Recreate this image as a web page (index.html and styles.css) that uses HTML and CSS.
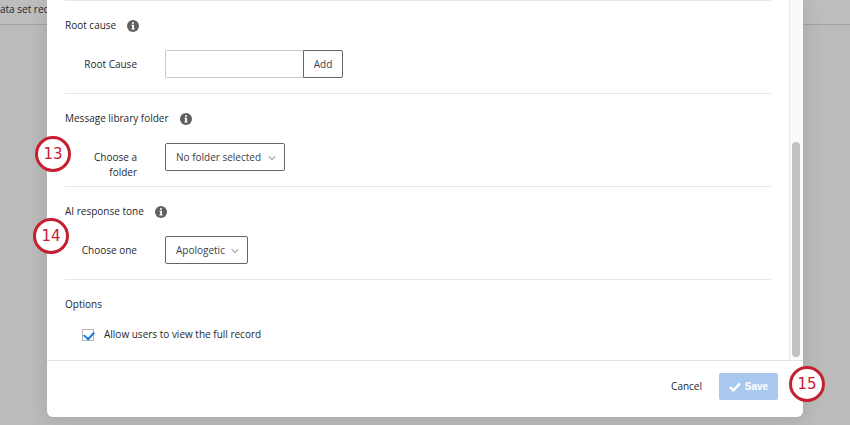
FILE: index.html
```html
<!DOCTYPE html>
<html lang="en">
<head>
<meta charset="utf-8">
<title>Ticket settings</title>
<link rel="stylesheet" href="styles.css">
</head>
<body>
<svg class="defs" aria-hidden="true">
  <symbol id="info" viewBox="0 0 12 12">
    <circle cx="6" cy="6" r="6" fill="#606060"/>
    <path d="M5 2.2h2v1.6H5zM4.6 4.8H7v3.6h.6v1.1H4.4V8.4h.8V5.9h-.6z" fill="#fff"/>
  </symbol>
  <symbol id="chevron" viewBox="0 0 8 6">
    <path d="M1 1.4 4 4.6 7 1.4" fill="none" stroke="#6a6e75" stroke-width="1"/>
  </symbol>
</svg>
<div class="page">
  <header class="backdrop"><span class="crumb">ata set rec</span></header>
  <main class="modal" role="dialog" aria-label="Ticket settings">
    <div class="content">
      <form class="form" id="settings">
        <section class="section">
          <h2 class="title">Root cause <svg class="info"><use href="#info"/></svg></h2>
          <div class="row">
            <label class="label" for="cause">Root Cause</label>
            <div class="group">
              <input class="text" id="cause" type="text">
              <button class="button add" type="button">Add</button>
            </div>
          </div>
        </section>
        <section class="section">
          <h2 class="title">Message library folder <svg class="info"><use href="#info"/></svg></h2>
          <div class="row">
            <label class="label" for="folder">Choose a folder</label>
            <div class="picker">
              <select class="button select" id="folder"><option>No folder selected</option></select>
              <svg class="chevron"><use href="#chevron"/></svg>
            </div>
          </div>
          <span class="badge badge-folder">13</span>
        </section>
        <section class="section">
          <h2 class="title">AI response tone <svg class="info"><use href="#info"/></svg></h2>
          <div class="row">
            <label class="label" for="tone">Choose one</label>
            <div class="picker">
              <select class="button select" id="tone"><option>Apologetic</option></select>
              <svg class="chevron"><use href="#chevron"/></svg>
            </div>
          </div>
          <span class="badge badge-tone">14</span>
        </section>
        <section class="section">
          <h2 class="title">Options</h2>
          <label class="option"><input class="check" type="checkbox" checked> Allow users to view the full record</label>
        </section>
      </form>
      <div class="track"><div class="thumb"></div></div>
    </div>
    <footer class="footer">
      <button class="cancel" type="button">Cancel</button>
      <button class="save" type="submit" form="settings" disabled>
        <svg class="tick" viewBox="0 0 12 10"><path d="M1 5.2 4.4 8.4 11 1.4" fill="none" stroke="#fff" stroke-width="2.4"/></svg>
        Save
      </button>
      <span class="badge badge-save">15</span>
    </footer>
  </main>
</div>
</body>
</html>
```
FILE: styles.css
```css
* { box-sizing: border-box; }

body {
  margin: 0;
  background: #bbb;
  color: #25282c;
  font: 10px/15px "Open Sans", "Liberation Sans", sans-serif;
}

button, input, select { font: inherit; color: inherit; }

.defs { position: absolute; width: 0; height: 0; }

.page {
  position: relative;
  display: flex;
  min-height: 100vh;
  padding: 0 47px 8px;
  overflow: hidden;
}

.backdrop {
  position: absolute;
  inset: 0 0 auto;
  height: 25px;
  padding-top: 2px;
  border-bottom: 1px solid #a2a2a2;
  background: #bdbdbd;
}

.modal {
  position: relative;
  display: flex;
  flex: 1;
  flex-direction: column;
  border-radius: 0 0 6px 6px;
  background: #fff;
  box-shadow: 0 2px 20px rgba(0, 0, 0, 0.12);
}

.content { display: flex; flex: 1; }

.form { flex: 1; padding: 0 18px; }

.section {
  position: relative;
  min-height: 93px;
  padding-top: 17px;
  border-top: 1px solid #e8e8e8;
}

.section:last-child { min-height: 80px; }

.title {
  display: flex;
  align-items: center;
  gap: 11px;
  margin: 0;
  font-size: 10px;
  font-weight: 400;
}

.info { width: 12px; height: 12px; }

.row {
  display: grid;
  grid-template-columns: 72px 1fr;
  column-gap: 28px;
  align-items: start;
  height: 43px;
  margin-top: 17px;
}

.label { padding-top: 7px; text-align: right; }

.group { display: flex; }

.text {
  width: 138px;
  height: 28px;
  border: 1px solid #c8c8c8;
  border-right: 0;
  border-radius: 2px 0 0 2px;
}

.button {
  height: 28px;
  border: 1px solid #62666d;
  border-radius: 2px;
  background: #fff;
  color: #3c4147;
}

.add { width: 40px; padding: 0; border-radius: 0 2px 2px 0; }

.picker { position: relative; justify-self: start; }

.select { appearance: none; padding: 0 22px 0 10px; }

.chevron {
  position: absolute;
  top: 12px;
  right: 9px;
  width: 8px;
  height: 6px;
  pointer-events: none;
}

.option {
  display: flex;
  align-items: center;
  gap: 10px;
  margin: 15px 0 0 17px;
}

.check {
  appearance: none;
  width: 12px;
  height: 12px;
  margin: 0;
  border: 1px solid #b4b4b4;
  background: #fff;
  position: relative;
}

.check:checked::after {
  content: "";
  position: absolute;
  top: 1px;
  left: 1px;
  width: 8px;
  height: 5px;
  border: solid #1879e8;
  border-width: 0 0 2px 2px;
  transform: rotate(-48deg);
}

.track {
  display: flex;
  flex-direction: column;
  justify-content: flex-end;
  width: 14px;
  padding: 0 3px 3px 2px;
  border-left: 1px solid #e8e8e8;
  background: #fafafa;
}

.thumb { width: 8px; height: 215px; border-radius: 4px; background: #c2c2c2; }

.footer {
  position: relative;
  display: flex;
  align-items: center;
  justify-content: flex-end;
  gap: 17px;
  height: 57px;
  padding: 0 25px 5px 0;
  border-top: 1px solid #e2e2e2;
}

.cancel { padding: 0; border: 0; background: none; }

.save {
  display: flex;
  align-items: center;
  justify-content: center;
  gap: 4px;
  width: 59px;
  height: 27px;
  padding: 0;
  border: 0;
  border-radius: 2px;
  background: #a9c8ef;
  color: #fff;
  font-family: "Liberation Sans", sans-serif;
  font-weight: 700;
}

.tick { width: 12px; height: 10px; }

.badge {
  position: absolute;
  display: grid;
  place-items: center;
  width: 36px;
  height: 36px;
  border: 3px solid #c52032;
  border-radius: 50%;
  background: #fff;
  color: #c52032;
  font: 15px/18px "DejaVu Sans", sans-serif;
}

.badge-folder { top: 42px; left: -30px; }
.badge-tone { top: 31px; left: -32px; }
.badge-save { top: 5px; right: -22px; }
```
